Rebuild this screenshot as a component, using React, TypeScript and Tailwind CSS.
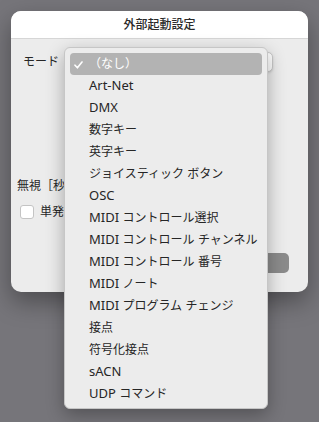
const items = [
  '（なし）',
  'Art-Net',
  'DMX',
  '数字キー',
  '英字キー',
  'ジョイスティック ボタン',
  'OSC',
  'MIDI コントロール選択',
  'MIDI コントロール チャンネル',
  'MIDI コントロール 番号',
  'MIDI ノート',
  'MIDI プログラム チェンジ',
  '接点',
  '符号化接点',
  'sACN',
  'UDP コマンド',
];

const font = { fontFamily: '"Noto Sans", "Noto Sans CJK JP", sans-serif' };

// Japanese runs render a touch smaller than the latin text, like the system menu font
function MixedText({ text }: { text: string }) {
  const parts = text.split(/([\u3000-\u9fff\uff00-\uffef]+)/);
  return (
    <span>
      {parts.map((p, i) =>
        /[\u3000-\u9fff\uff00-\uffef]/.test(p) ? (
          <span key={i} className="text-[12px]">
            {p}
          </span>
        ) : (
          <span key={i}>{p}</span>
        )
      )}
    </span>
  );
}

export default function App() {
  return (
    <div className="min-h-screen w-full bg-[#76757a] p-[11px] text-[13px] text-[#262626]" style={font}>
      <div className="relative flex h-[281px] w-[297px] flex-col rounded-[10px] bg-[#ececec] shadow-[0_10px_24px_rgba(0,0,0,0.35)]">
        {/* Title bar */}
        <div className="flex h-[28px] items-center justify-center rounded-t-[10px] border-b border-[#d6d6d6] bg-white text-[12px] font-medium text-[#2a2a2a]">
          外部起動設定
        </div>

        {/* Form body */}
        <div className="flex flex-1 flex-col text-[12px]">
          <div className="mt-[13px] flex h-[20px] items-center pl-[12px]">
            <span>モード</span>
            <div className="ml-[11px] h-[20px] w-[203px] rounded-[5px] border border-[#c9c9c9] bg-white shadow-sm" />
          </div>

          <div className="mt-[104px] flex h-[20px] items-center pl-[6px]">
            <span>無視［秒］</span>
          </div>

          <div className="mt-[8px] flex h-[16px] items-center gap-[6px] pl-[9px]">
            <div className="h-[14px] w-[14px] rounded-[3px] border border-[#c4c4c4] bg-white" />
            <span>単発</span>
          </div>

          <div className="mt-auto flex justify-end pb-[19px] pr-[19px]">
            <div className="h-[20px] w-[80px] rounded-[5px] bg-[#8b8b8b]" />
          </div>
        </div>

        {/* Popup menu */}
        <div className="absolute left-[53px] top-[36px] w-[204px] rounded-[6px] border border-[#c6c6c6] bg-[#ececec] px-[5px] pb-[3px] pt-[5px] shadow-[0_6px_18px_rgba(0,0,0,0.3)]">
          {items.map((label, i) => (
            <div
              key={label}
              className={`relative flex h-[22px] items-center pl-[19px] ${
                i === 0 ? 'rounded-[4px] bg-[#b3b3b3] text-white' : ''
              }`}
            >
              {i === 0 && (
                <svg className="absolute left-[4px] top-[8px]" width="9" height="8" viewBox="0 0 9 8" fill="none">
                  <path d="M1 4.2 L3.4 6.8 L8 1" stroke="white" strokeWidth="1.6" strokeLinecap="round" strokeLinejoin="round" />
                </svg>
              )}
              <MixedText text={label} />
            </div>
          ))}
        </div>
      </div>
    </div>
  );
}
